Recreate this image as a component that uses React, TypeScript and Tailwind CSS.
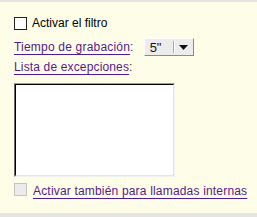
import React from "react";

export default function App() {
  const font = { fontFamily: '"Liberation Sans", Arial, sans-serif' };
  return (
    <div
      className="w-[257px] h-[217px] bg-[#fefee8] border-t-2 border-b-4 border-[#e4e4e4] flex flex-col pl-[14px] text-[12px] leading-[14px] text-black"
      style={font}
    >
      {/* Row 1 */}
      <div className="mt-[15px] h-[13px] flex items-center">
        <div className="w-[13px] h-[13px] border border-[#222] bg-white shrink-0" />
        <span className="ml-[5px] leading-[13px]">Activar el filtro</span>
      </div>

      {/* Row 2 */}
      <div className="mt-[8px] flex items-start h-[18px]">
        <span className="mt-[2px] tracking-[0.2px]">
          <span className="text-[#551a8b] underline underline-offset-[3px]">Tiempo de grabación</span>
          <span className="text-[#333]">:</span>
        </span>
        <div className="ml-[10px] w-[50px] h-[18px] bg-[#ececec] border border-t-white border-l-white border-b-[#8a8a8a] border-r-[#8a8a8a] flex items-stretch">
          <span className="pl-[5px] pt-[1px] flex-1 leading-[15px] text-[13px] text-[#111]">5"</span>
          <div className="w-[1px] my-[2px] bg-[#a8a8a8]" />
          <div className="w-[1px] my-[2px] bg-white" />
          <div className="w-[18px] flex items-center justify-center">
            <svg width="9" height="5" viewBox="0 0 9 5">
              <path d="M0 0 H9 L4.5 5 Z" fill="#111" />
            </svg>
          </div>
        </div>
      </div>

      {/* Row 3 */}
      <div className="mt-[4px] tracking-[0.15px]">
        <span className="text-[#551a8b] underline underline-offset-[3px]">Lista de excepciones</span>
        <span className="text-[#333]">:</span>
      </div>

      {/* Textarea */}
      <div className="mt-[9px] w-[161px] h-[94px] border border-t-[#a0a0a0] border-l-[#6a6a6a] border-b-[#f2f2f2] border-r-[#f2f2f2]">
        <div className="w-full h-full bg-white border border-t-black border-l-black border-b-[#e4e4e4] border-r-[#e4e4e4]" />
      </div>

      {/* Row 4 */}
      <div className="mt-[6px] flex items-start">
        <div className="w-[13px] h-[13px] border border-[#c4c4c4] bg-[#ebebeb] shrink-0" />
        <span className="ml-[6px] mt-[1px] tracking-[0.18px] text-[#551a8b] underline underline-offset-[3px]">
          Activar también para llamadas internas
        </span>
      </div>
    </div>
  );
}
